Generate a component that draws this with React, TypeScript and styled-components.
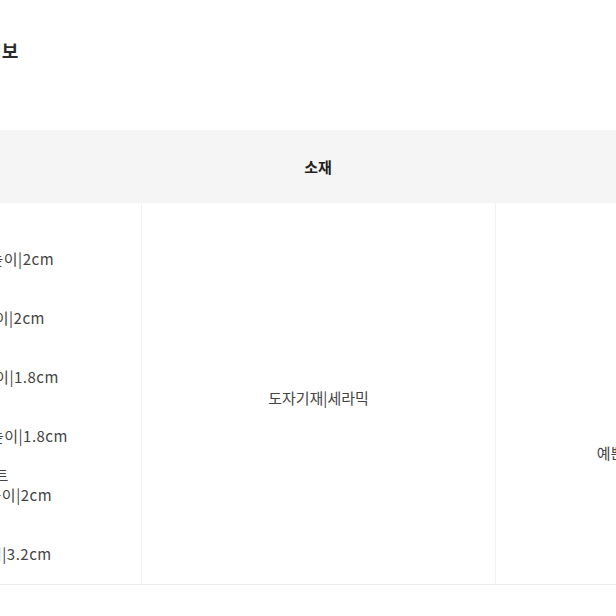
import React from 'react';
import styled, { createGlobalStyle } from 'styled-components';

const GlobalStyle = createGlobalStyle`
  html, body {
    margin: 0;
    padding: 0;
    background: #ffffff;
  }
  body {
    font-family: "Noto Sans CJK KR", "Noto Sans", sans-serif;
    color: #333333;
  }
`;

// Visible window of the page
const Page = styled.div`
  width: 616px;
  height: 616px;
  overflow: hidden;
  background: #ffffff;
`;

// The info section is wider than the window and scrolled to the left
const Section = styled.section`
  width: 1062px;
  margin-left: -213px;
`;

const SectionTitle = styled.h2`
  margin: 0;
  padding: 37px 0 0 165px;
  font-size: 18px;
  line-height: 26px;
  font-weight: 600;
  color: #2b2b2b;
`;

const Table = styled.div`
  margin-top: 67px;
  display: grid;
  grid-template-columns: repeat(3, 354px);
`;

const HeadCell = styled.div`
  height: 73px;
  display: flex;
  align-items: center;
  justify-content: center;
  background: #f5f5f5;
  font-size: 15px;
  font-weight: 600;
  color: #222222;
`;

const BodyCell = styled.div<{ $first?: boolean; $offset?: number }>`
  display: flex;
  flex-direction: column;
  align-items: center;
  justify-content: ${(p) => (p.$first ? 'flex-start' : 'center')};
  padding: ${(p) => (p.$first ? '46px 20px 20px' : `${p.$offset ?? 0}px 20px 0`)};
  border-left: ${(p) => (p.$first ? 'none' : '1px solid #f2f2f2')};
  border-bottom: 1px solid #ececec;
  font-size: 15px;
  color: #444444;
  text-align: center;
  white-space: nowrap;
`;

const SizeLine = styled.div`
  line-height: 19.67px;
  min-height: 19.67px;
  letter-spacing: 0.5px;
`;

const Spacer = styled.div<{ $lines: number }>`
  height: ${(p) => p.$lines * 19.67}px;
`;

const CellText = styled.span`
  line-height: 20px;
`;

type Row = { text?: string; gap?: number };

const sizes: Row[] = [
  { text: '큰 원형 접시 지름 높이|2cm' },
  { gap: 2 },
  { text: '중간 원형 접시 높이|2cm' },
  { gap: 2 },
  { text: '작은 원형 앞접시 높이|1.8cm' },
  { gap: 2 },
  { text: '오목한 원형 볼 그릇 높이|1.8cm' },
  { gap: 1 },
  { text: '파스타볼 세트' },
  { text: '파스타볼 지름 및 높이|2cm' },
  { gap: 2 },
  { text: '머그컵 지름 및 높이|3.2cm' },
];

export default function App() {
  return (
    <>
      <GlobalStyle />
      <Page>
        <Section>
          <SectionTitle>상품정보</SectionTitle>
          <Table>
            <HeadCell>구분</HeadCell>
            <HeadCell>소재</HeadCell>
            <HeadCell>용도</HeadCell>

            <BodyCell $first>
              {sizes.map((row, i) =>
                row.text ? <SizeLine key={i}>{row.text}</SizeLine> : <Spacer key={i} $lines={row.gap ?? 1} />
              )}
            </BodyCell>
            <BodyCell $offset={10}>
              <CellText>도자기재|세라믹</CellText>
            </BodyCell>
            <BodyCell $offset={120}>
              <CellText>예쁜 식탁 위 그릇 연출용</CellText>
            </BodyCell>
          </Table>
        </Section>
      </Page>
    </>
  );
}
